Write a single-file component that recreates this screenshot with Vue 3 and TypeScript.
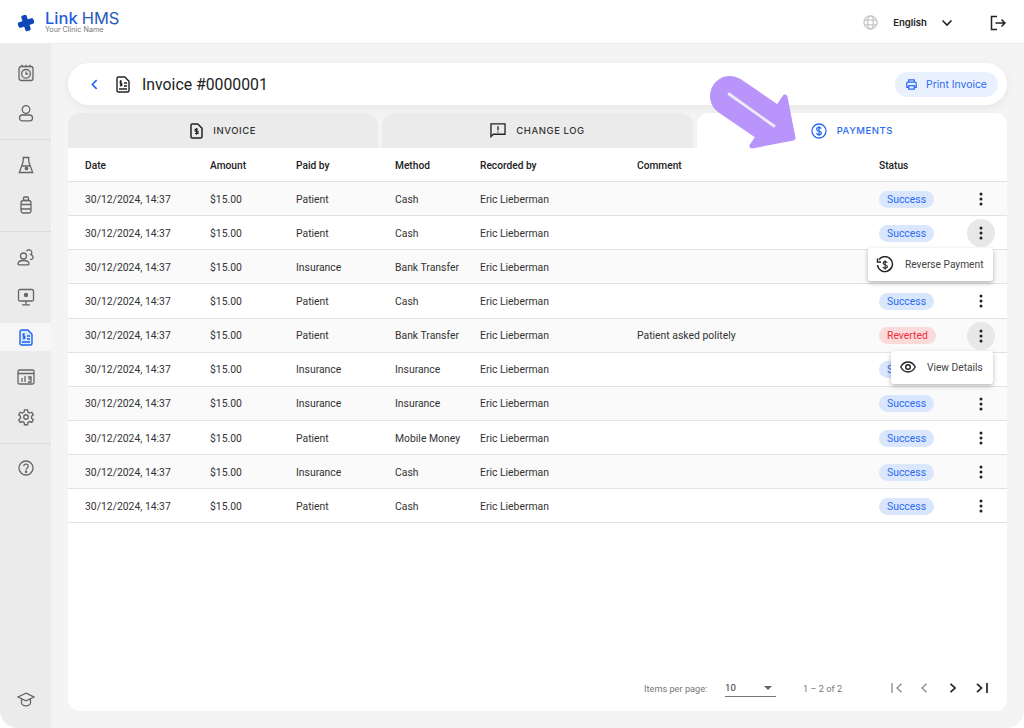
<script setup lang="ts">
interface Row { paid: string; method: string; comment: string; status: string; menu?: string; hot?: boolean }
const rows: Row[] = [
  { paid: 'Patient', method: 'Cash', comment: '', status: 'Success' },
  { paid: 'Patient', method: 'Cash', comment: '', status: 'Success', hot: true, menu: 'reverse' },
  { paid: 'Insurance', method: 'Bank Transfer', comment: '', status: '' },
  { paid: 'Patient', method: 'Cash', comment: '', status: 'Success' },
  { paid: 'Patient', method: 'Bank Transfer', comment: 'Patient asked politely', status: 'Reverted', hot: true, menu: 'view' },
  { paid: 'Insurance', method: 'Insurance', comment: '', status: 'Success' },
  { paid: 'Insurance', method: 'Insurance', comment: '', status: 'Success' },
  { paid: 'Patient', method: 'Mobile Money', comment: '', status: 'Success' },
  { paid: 'Insurance', method: 'Cash', comment: '', status: 'Success' },
  { paid: 'Patient', method: 'Cash', comment: '', status: 'Success' },
]
const headers = ['Date', 'Amount', 'Paid by', 'Method', 'Recorded by', 'Comment', 'Status', '']
</script>

<template>
  <div class="window">
    <header class="topbar">
      <div class="brand">
        <svg class="logo" width="18" height="18" viewBox="0 0 18 18"><g transform="rotate(-18 9 9)" fill="#0f47b8"><rect x="0.800" y="6.200" width="16.400" height="5.600" rx="1.800"/><rect x="6.200" y="0.800" width="5.600" height="16.400" rx="1.800"/></g></svg>
        <div class="brand-text">
          <div class="brand-name"><span class="b1">Link</span><span class="b2">HMS</span></div>
          <div class="brand-sub">Your Clinic Name</div>
        </div>
      </div>
      <div class="top-right">
        <svg width="15" height="15" viewBox="0 0 16 16" fill="none" stroke="#c6c6c6" stroke-width="1.400"><circle cx="8" cy="8" r="7"/><ellipse cx="8" cy="8" rx="3" ry="7"/><path d="M1.500 5.500h13M1.500 10.500h13"/></svg>
        <span class="lang">English</span>
        <svg width="12" height="8" viewBox="0 0 12 8" fill="none" stroke="#222" stroke-width="1.600"><path d="M1.500 1.500L6 6l4.500-4.500"/></svg>
        <svg class="logout" width="16" height="16" viewBox="0 0 16 16" fill="none" stroke="#222" stroke-width="1.500"><path d="M7 1.500H1.500v13H7M5.500 8H15M11.500 4.500L15 8l-3.500 3.500"/></svg>
      </div>
    </header>

    <div class="body">
      <aside class="sidebar">
        <div class="side-group g1">
          <div class="side-item"><svg width="18" height="18" viewBox="0 0 18 18" fill="none" stroke="#666" stroke-width="1.300"><rect x="2" y="2.500" width="14" height="14" rx="2" fill="#e2e2e2"/><circle cx="9" cy="9.800" r="4.300" fill="#ebebeb"/><path d="M9 7.500v2.500h2.200M5 .8v2M9 .8v2M13 .8v2"/></svg></div>
          <div class="side-item"><svg width="16" height="18" viewBox="0 0 16 18" fill="none" stroke="#666" stroke-width="1.300"><circle cx="8" cy="5.500" r="3.800"/><rect x="1.500" y="11" width="13" height="5.800" rx="2.900"/></svg></div>
        </div>
        <div class="side-group g2">
          <div class="side-item"><svg width="16" height="18" viewBox="0 0 16 18" fill="none" stroke="#666" stroke-width="1.300"><path d="M4.500 1.500h7M5.500 1.500l-.6 5L1.300 16.500h13.400L11 6.500l-.5-5M4 10h8"/><circle cx="8.500" cy="12.500" r="1.200" fill="#666"/></svg></div>
          <div class="side-item"><svg width="14" height="18" viewBox="0 0 14 18" fill="none" stroke="#666" stroke-width="1.300"><rect x="4.500" y="1" width="5" height="3.500" rx="1"/><rect x="2" y="4.500" width="10" height="12.500" rx="2.500"/><path d="M2 8.500h10M2 13h10"/></svg></div>
        </div>
        <div class="side-group g3">
          <div class="side-item"><svg width="18" height="18" viewBox="0 0 18 18" fill="none" stroke="#666" stroke-width="1.300"><circle cx="6.500" cy="8" r="3"/><path d="M1 16c0-2.500 2-3.500 5.500-3.500S12 13.500 12 16c0 .5-.5.800-1 .8H2c-.5 0-1-.3-1-.8z"/><path d="M9.500 3c1.500-2 5-1.500 5.300 1.200.1 1-.3 1.800-1 2.300 2 .5 3 3.500 1.500 4.500-.8.500-1.500.5-2.300.3"/></svg></div>
          <div class="side-item"><svg width="18" height="18" viewBox="0 0 18 18" fill="none" stroke="#666" stroke-width="1.300"><rect x="1.500" y="1.500" width="15" height="11.500" rx="1.500"/><path d="M9 13v3.500M5 16.800h8"/><circle cx="9" cy="7" r="2.200" fill="#666" stroke="none"/></svg></div>
          <div class="side-item active"><svg width="14" height="17" viewBox="0 0 14 17" fill="none" stroke="#1d63f0" stroke-width="1.400"><path d="M1 2.500C1 1.500 1.500 1 2.500 1h6.300L13 5.200v9.300c0 1-.5 1.500-1.500 1.500h-9c-1 0-1.500-.5-1.500-1.500z" fill="#dbe7fd"/><path d="M3 13h8M8 7h3M8 10h3"/><path d="M5.800 5.200H4.200v2h1.600v2.200H3.800M4.800 4v6.500" stroke-width="1.100"/></svg></div>
          <div class="side-item"><svg width="18" height="16" viewBox="0 0 18 16" fill="none" stroke="#666" stroke-width="1.300"><rect x="1" y="1" width="16" height="14" rx="1.500"/><path d="M1 4.500h16M5 13V9M8 13V7M11 8h3v2h-2.500M14 10v3h-3"/></svg></div>
          <div class="side-item"><svg width="18" height="18" viewBox="0 0 24 24" fill="none" stroke="#666" stroke-width="1.800"><circle cx="12" cy="12" r="3"/><path d="M10 2.500h4l.6 3 2.200 1.200 2.900-1 2 3.400-2.300 2v2.600l2.300 2-2 3.400-2.900-1-2.200 1.200-.6 3h-4l-.6-3-2.200-1.200-2.900 1-2-3.400 2.300-2v-2.600l-2.300-2 2-3.400 2.900 1 2.200-1.200z"/></svg></div>
        </div>
        <div class="side-group g4">
          <div class="side-item"><svg width="16" height="16" viewBox="0 0 16 16" fill="none" stroke="#666" stroke-width="1.300"><circle cx="8" cy="8" r="7"/><path d="M5.800 6.200C5.800 5 6.800 4.200 8 4.200s2.200.8 2.200 2c0 1.800-2.200 1.700-2.200 3.500"/><circle cx="8" cy="11.800" r=".6" fill="#666"/></svg></div>
        </div>
        <div class="side-bottom">
          <svg width="18" height="15" viewBox="0 0 18 15" fill="none" stroke="#666" stroke-width="1.300"><path d="M9 1.200L17 5 9 8.800 1 5zM4.500 7v4c0 1.500 2 2.800 4.500 2.800s4.500-1.300 4.500-2.800V7"/></svg>
        </div>
      </aside>

      <main class="main">
        <section class="title-card">
          <svg width="7" height="11" viewBox="0 0 8 12" fill="none" stroke="#1d63f0" stroke-width="1.800" class="back"><path d="M6.500 1L1.500 6l5 5"/></svg>
          <svg width="14" height="17" viewBox="0 0 14 17" fill="none" stroke="#222" stroke-width="1.400" class="doc"><path d="M1 2.500C1 1.500 1.500 1 2.500 1h6.300L13 5.200v9.300c0 1-.5 1.500-1.500 1.500h-9c-1 0-1.500-.5-1.500-1.500z"/><path d="M3 13h8M8 7h3M8 10h3"/><path d="M5.800 5.200H4.200v2h1.600v2.200H3.800M4.800 4v6.500" stroke-width="1.100"/></svg>
          <h1 class="title">Invoice #0000001</h1>
          <button class="print">
            <svg width="11" height="11" viewBox="0 0 14 14" fill="none" stroke="#2a6bf2" stroke-width="1.600"><path d="M3.500 4V1h7v3M3.500 10.500H1V5.500C1 4.700 1.500 4 2.300 4h9.400c.8 0 1.300.7 1.300 1.500v5h-2.500M3.500 8.500h7V13h-7z"/></svg>
            Print Invoice
          </button>
        </section>

        <nav class="tabs">
          <div class="tab">
            <svg width="13" height="16" viewBox="0 0 13 16" fill="none" stroke="#222" stroke-width="1.500"><path d="M1 2.300C1 1.500 1.500 1 2.300 1h5.500L12 5.200v8.500c0 .8-.5 1.300-1.300 1.300H2.300c-.8 0-1.300-.5-1.300-1.300z"/><path d="M8 6.200H5.200v2H8v2.300H5M6.600 5v6.800" stroke-width="1.100"/></svg>
            <span>INVOICE</span>
          </div>
          <div class="tab">
            <svg width="16" height="15" viewBox="0 0 17 16" fill="none" stroke="#222" stroke-width="1.400"><path d="M1 1h15v11H3.500L1 14.500z"/><path d="M8.500 3.500v4.200M8.500 9v1.200"/></svg>
            <span>CHANGE LOG</span>
          </div>
          <div class="tab selected">
            <svg width="16" height="16" viewBox="0 0 16 16" fill="none" stroke="#2a6bf2" stroke-width="1.300"><circle cx="8" cy="8" r="7"/><path d="M10.300 5.600C9.900 4.800 9 4.400 8 4.400c-1.300 0-2.300.7-2.300 1.800 0 2.500 4.700 1.200 4.700 3.700 0 1.100-1 1.800-2.400 1.800-1.100 0-2.100-.5-2.500-1.300M8 3v10"/></svg>
            <span>PAYMENTS</span>
          </div>
        </nav>

        <section class="table-card">
          <div class="grid head">
            <div v-for="h in headers" :key="h" class="cell">{{ h }}</div>
          </div>
          <div v-for="(r, i) in rows" :key="i" class="grid row" :class="{ odd: i % 2 === 0 }">
            <div class="cell">30/12/2024, 14:37</div>
            <div class="cell">$15.00</div>
            <div class="cell">{{ r.paid }}</div>
            <div class="cell">{{ r.method }}</div>
            <div class="cell">Eric Lieberman</div>
            <div class="cell">{{ r.comment }}</div>
            <div class="cell">
              <span v-if="r.status" class="pill" :class="{ bad: r.status === 'Reverted' }">{{ r.status }}</span>
            </div>
            <div class="cell action">
              <span class="dots" :class="{ hot: r.hot }">
                <svg width="4" height="14" viewBox="0 0 4 14" fill="#222"><circle cx="2" cy="2" r="1.500"/><circle cx="2" cy="7" r="1.500"/><circle cx="2" cy="12" r="1.500"/></svg>
              </span>
              <div v-if="r.menu === 'reverse'" class="menu wide">
                <svg width="18" height="18" viewBox="0 0 18 18" fill="none" stroke="#222" stroke-width="1.400"><path d="M3 3.500A7.500 7.500 0 1 1 1.500 9M1.500 2.500v3.500H5"/><path d="M11.300 6.800c-.4-.8-1.200-1.200-2.200-1.200-1.200 0-2 .6-2 1.600 0 2.200 4.300 1 4.300 3.300 0 1-.9 1.600-2.200 1.600-1 0-1.900-.4-2.300-1.200M9.100 4.200v9.600" stroke-width="1.100"/></svg>
                <span>Reverse Payment</span>
              </div>
              <div v-if="r.menu === 'view'" class="menu narrow">
                <svg width="16" height="12" viewBox="0 0 16 12" fill="none" stroke="#222" stroke-width="1.400"><path d="M.8 6C2.500 2.700 5 1 8 1s5.500 1.700 7.200 5C13.500 9.300 11 11 8 11S2.500 9.300.8 6z"/><circle cx="8" cy="6" r="2.300"/></svg>
                <span>View Details</span>
              </div>
            </div>
          </div>

          <footer class="pager">
            <span class="pp-label">Items per page:</span>
            <div class="select"><span>10</span><i class="caret"></i></div>
            <span class="range">1 – 2 of 2</span>
            <div class="page-btns">
              <svg width="12" height="10" viewBox="0 0 12 10" fill="none" stroke="#8a8a8a" stroke-width="1.300"><path d="M1 0v10M10.500 .8L6 5l4.500 4.200"/></svg>
              <svg class="prev" width="8" height="10" viewBox="0 0 8 10" fill="none" stroke="#8a8a8a" stroke-width="1.300"><path d="M6.500 .8L2 5l4.500 4.200"/></svg>
              <svg width="8" height="10" viewBox="0 0 8 10" fill="none" stroke="#222" stroke-width="1.700"><path d="M1.500 .8L6 5 1.500 9.200"/></svg>
              <svg width="12" height="10" viewBox="0 0 12 10" fill="none" stroke="#222" stroke-width="1.700"><path d="M1 .8L5.500 5 1 9.200M11 0v10"/></svg>
            </div>
          </footer>
        </section>
      </main>
    </div>

    <svg class="arrow" width="95" height="85" viewBox="0 0 95 85">
      <path d="M25 26 L 63 52" fill="none" stroke="#b894fb" stroke-width="40" stroke-linecap="round"/>
      <path d="M47 76 L 88 68 L 80 27 Z" fill="#b894fb" stroke="#b894fb" stroke-width="5" stroke-linejoin="round"/>
      <path d="M24 24 L 69 56" fill="none" stroke="#efeaf8" stroke-width="2.800" stroke-linecap="round"/>
    </svg>
  </div>
</template>

<style scoped>
.window {
  position: relative;
  width: 1024px;
  height: 728px;
  background: #f4f4f4;
  border-radius: 18px;
  overflow: hidden;
  display: flex;
  flex-direction: column;
  font-family: Roboto, "Liberation Sans", sans-serif;
  color: #222;
}
.topbar {
  height: 44px;
  flex: none;
  background: #fff;
  border-bottom: 1px solid #ededed;
  box-sizing: border-box;
  display: flex;
  align-items: center;
  justify-content: space-between;
  padding: 0 18px 0 17px;
}
.brand { display: flex; align-items: center; gap: 10px; }
.logo { margin-top: 3px; }
.brand-text { margin-top: 2px; }
.brand-name { display: flex; gap: 4px; font-family: Inter, sans-serif; font-size: 16.500px; color: #1d5fe0; white-space: nowrap; }
.b1, .b2 { display: inline-block; line-height: 14px; }
.b1 { font-weight: 500; }
.b2 { color: #2a5cb8; font-weight: 400; }
.brand-sub { font-family: Inter, sans-serif; font-size: 7.200px; line-height: 8px; margin-top: 1px; color: #777; white-space: nowrap; }
.top-right { display: flex; align-items: center; margin-top: 2px; }
.lang { font-family: Inter, sans-serif; font-size: 9.600px; font-weight: 600; margin: 0 14px 0 15px; color: #222; }
.logout { margin-left: 37px; }

.body { flex: 1; display: flex; min-height: 0; }
.sidebar {
  width: 51px;
  flex: none;
  background: #ebebeb;
  display: flex;
  flex-direction: column;
  align-items: stretch;
}
.side-group { border-bottom: 1px solid #dcdcdc; display: flex; flex-direction: column; }
.g1 { padding: 9px 0 6px; }
.g2 { padding: 5px 0 6px; }
.g3 { padding: 5px 0 6px; }
.g4 { padding-top: 4px; border-bottom: none; }
.side-item { height: 40px; display: flex; align-items: center; justify-content: center; }
.side-item.active { background: #f6f6f6; height: 28px; margin: 6px 0; }
.side-bottom { margin-top: auto; height: 58px; display: flex; align-items: center; justify-content: center; }

.main { flex: 1; padding: 19px 17px 17px; display: flex; flex-direction: column; min-width: 0; }
.title-card {
  height: 42px;
  flex: none;
  background: #fff;
  border-radius: 21px;
  box-shadow: 0 3px 10px rgba(0,0,0,.06);
  display: flex;
  align-items: center;
  padding: 0 9px 0 23px;
}
.back { margin-right: 18px; }
.doc { margin-right: 12px; }
.title { font-family: Roboto, sans-serif; font-size: 15.800px; font-weight: 400; margin: 0; color: #222; flex: 1; }
.print {
  height: 25px;
  width: 103px;
  border: none;
  border-radius: 13px;
  background: #eaf1fe;
  color: #2a6bf2;
  font-family: Inter, sans-serif;
  font-size: 10.400px;
  display: flex;
  align-items: center;
  justify-content: center;
  gap: 9px;
  padding: 0;
}
.tabs { display: flex; gap: 4px; margin-top: 8px; flex: none; height: 35px; }
.tab {
  flex: 1;
  background: #ebebeb;
  border-radius: 12px 12px 0 0;
  display: flex;
  align-items: center;
  justify-content: center;
  gap: 10px;
  font-family: Inter, sans-serif;
  font-size: 9.500px;
  font-weight: 500;
  letter-spacing: .55px;
  color: #333;
}
.tab.selected { background: #fff; color: #2a6bf2; }
.table-card {
  flex: 1;
  background: #fff;
  border-radius: 0 0 12px 12px;
  display: flex;
  flex-direction: column;
  min-height: 0;
}
.grid {
  display: grid;
  grid-template-columns: 125px 86px 99px 85px 157px 242px 88px 1fr;
  padding: 1px 0 0 17px;
  box-sizing: border-box;
  align-items: center;
  border-bottom: 1px solid #dfe3e3;
  font-size: 10.400px;
  color: #333;
}
.head { height: 34px; font-weight: 500; font-size: 10.200px; color: #222; }
.row { height: 34.150px; }
.row.odd { background: #fafafa; }
.cell { min-width: 0; white-space: nowrap; }
.pill {
  display: inline-flex;
  align-items: center;
  height: 17px;
  padding: 0 8px;
  border-radius: 9px;
  background: #d9e6fc;
  color: #2a6bf2;
}
.pill.bad { background: #fbdada; color: #ef2f3c; }
.action { position: relative; display: flex; justify-content: flex-start; padding-left: 0; }
.dots {
  width: 28px;
  height: 28px;
  border-radius: 50%;
  display: flex;
  align-items: center;
  justify-content: center;
}
.dots.hot { background: #e8e8e8; }
.menu {
  position: absolute;
  top: 29px;
  right: 14px;
  height: 33px;
  background: #fff;
  border-radius: 3px;
  box-shadow: 0 2px 5px rgba(0,0,0,.28);
  display: flex;
  align-items: center;
  z-index: 2;
  color: #444;
  font-size: 10.200px;
}
.menu.wide { width: 125px; padding-left: 8px; gap: 11px; box-sizing: border-box; }
.menu.narrow { width: 102px; padding-left: 9px; gap: 11px; box-sizing: border-box; }
.pager {
  margin-top: auto;
  height: 46px;
  flex: none;
  display: flex;
  align-items: center;
  font-size: 9.200px;
  color: #777;
  padding-left: 576px;
}
.pp-label { width: 81px; }
.select {
  width: 51px;
  height: 16px;
  border-bottom: 1px solid #777;
  color: #333;
  display: flex;
  align-items: center;
  justify-content: space-between;
  font-size: 9.600px;
}
.caret { width: 0; height: 0; border: 4px solid transparent; border-top: 4px solid #666; border-bottom: none; margin-right: 4px; }
.range { margin-left: 27px; }
.page-btns { margin-left: 49px; display: flex; align-items: center; gap: 19px; }
.prev { margin: 0 2px 0 -2px; }
.arrow { position: absolute; left: 705px; top: 70px; z-index: 5; }
</style>

<style>
html, body { margin: 0; background: #fff; }
</style>
